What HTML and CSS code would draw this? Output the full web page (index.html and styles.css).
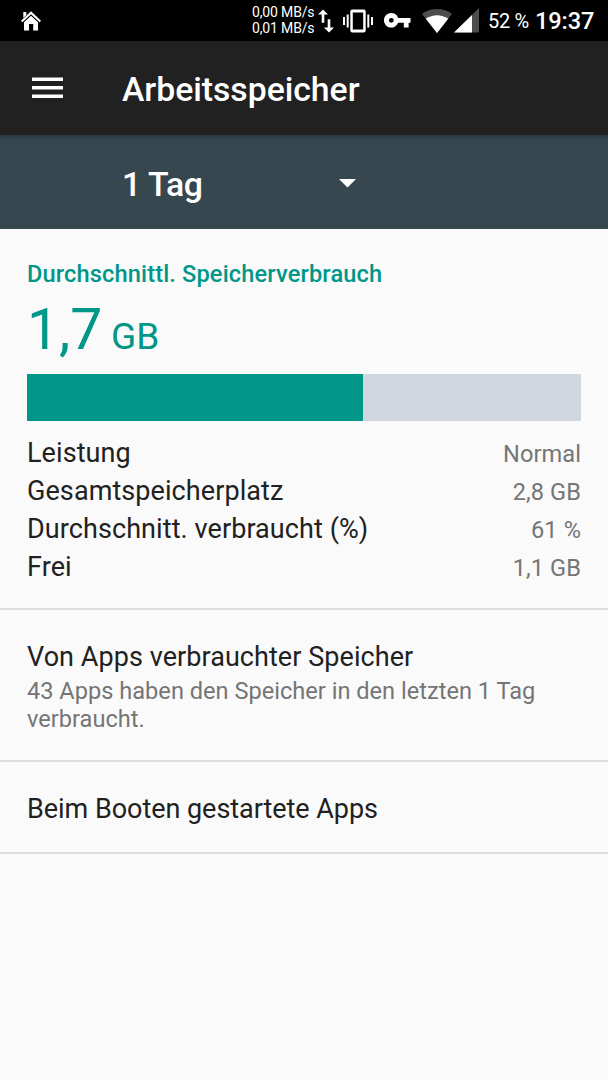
FILE: index.html
```html
<!DOCTYPE html>
<html lang="de">
<head>
<meta charset="utf-8">
<title>Arbeitsspeicher</title>
<link rel="stylesheet" href="styles.css">
</head>
<body>
<div class="statusbar">
  <svg class="icon-home" width="20" height="20" viewBox="0 0 20 20" fill="#fff"><path d="M2.3 1h3v3L2.3 7z"/><path d="M10 0.3L20 9.7L18.6 11.2L10 3.2L1.4 11.2L0 9.7z"/><path d="M10 4.8L17 11.3V19.4H12.2V13H8V19.4H3V11.3z"/></svg>
  <div class="traffic"><span>0,00 MB/s</span><span>0,01 MB/s</span></div>
  <svg class="icon-arrows" width="16" height="24" viewBox="0 0 16 24" fill="#fff"><path d="M5 .5L10 5.6H6.3V13.8H3.7V5.6H0z"/><path d="M11 23.5L6 18.4H9.7V10.2H12.3V18.4H16z"/></svg>
  <svg class="icon-vibrate" width="30" height="24" viewBox="0 0 30 24" fill="#fff"><path d="M0 8h2v8H0zM3.7 5.5h2v13h-2zM24.3 5.5h2v13h-2zM28 8h2v8h-2z"/><path fill-rule="evenodd" d="M9.3 0.5h11.4a2 2 0 0 1 2 2v19a2 2 0 0 1-2 2H9.3a2 2 0 0 1-2-2v-19a2 2 0 0 1 2-2zM9.8 3.5v17h10.4v-17z"/></svg>
  <svg class="icon-key" width="27" height="15" viewBox="0 0 27 15" fill="#fff"><path fill-rule="evenodd" d="M7.3 0A7.3 7.3 0 0 1 14.1 4.9H26.5V9.8H24.6V14.4H19.8V9.8H14.1A7.3 7.3 0 1 1 7.3 0zM7.3 4.9a2.4 2.4 0 1 0 0 4.8a2.4 2.4 0 0 0 0-4.8z"/></svg>
  <svg class="icon-wifi" width="30" height="24" viewBox="0 0 30 24"><path fill="#4d4d4d" d="M0 5C8-1.6 22-1.6 30 5L15 24z"/><path fill="#fff" d="M3.8 9.8C10.5 5 19.5 5 26.2 9.8L15 24z"/></svg>
  <svg class="icon-signal" width="25" height="25" viewBox="0 0 25 25"><path fill="#4d4d4d" d="M25 0V24.5H0z"/><path fill="#fff" d="M18 7V24.5H0z"/></svg>
  <span class="battery">52 %</span>
  <span class="clock">19:37</span>
</div>
<header class="appbar">
  <svg class="menu" width="31" height="22" viewBox="0 0 31 22" fill="#fff"><path d="M0 .4h31v3.6H0zM0 9h31v3.6H0zM0 17.4h31v3.6H0z"/></svg>
  <h1 class="title">Arbeitsspeicher</h1>
</header>
<div class="spinner">
  <span class="spinner-label">1 Tag</span>
  <svg class="caret" width="17" height="9" viewBox="0 0 17 9" fill="#fff"><path d="M0 0h17L8.5 8.5z"/></svg>
</div>
<section class="summary">
  <h2 class="heading">Durchschnittl. Speicherverbrauch</h2>
  <div class="amount"><span class="number">1,7</span> <span class="unit">GB</span></div>
  <div class="meter"><div class="meter-fill"></div></div>
  <div class="row"><span>Leistung</span><span class="value">Normal</span></div>
  <div class="row"><span>Gesamtspeicherplatz</span><span class="value">2,8 GB</span></div>
  <div class="row"><span>Durchschnitt. verbraucht (%)</span><span class="value">61 %</span></div>
  <div class="row"><span>Frei</span><span class="value">1,1 GB</span></div>
</section>
<section class="item item-apps">
  <div class="item-title">Von Apps verbrauchter Speicher</div>
  <p class="item-text">43 Apps haben den Speicher in den letzten 1 Tag verbraucht.</p>
</section>
<section class="item item-boot">
  <div class="item-title">Beim Booten gestartete Apps</div>
</section>
</body>
</html>
```
FILE: styles.css
```css
* { box-sizing: border-box; }
body {
  margin: 0;
  min-height: 1080px;
  background: #fafafa;
  color: #212121;
  font-family: Roboto, "Noto Sans", sans-serif;
  font-size: 27px;
}
h1, h2, p { margin: 0; }
svg { display: block; flex: none; }

.statusbar {
  display: flex;
  align-items: center;
  height: 41px;
  padding: 0 14px 0 20.5px;
  background: #000;
  color: #fff;
  white-space: nowrap;
}
.traffic {
  display: flex;
  flex-direction: column;
  width: 63px;
  margin-left: auto;
  padding-bottom: 1px;
  font-size: 14px;
  line-height: 16px;
  letter-spacing: -.15px;
}
.icon-arrows { margin-left: 3px; }
.icon-vibrate { margin-left: 9px; }
.icon-key { margin-left: 11px; }
.icon-wifi { margin-left: 11px; }
.icon-signal { margin-left: 2px; }
.battery { width: 42px; margin-left: 9px; font-size: 20px; letter-spacing: -.3px; }
.clock { width: 59px; margin-left: 5px; padding-top: 1px; font-size: 23.6px; font-weight: 500; letter-spacing: -.1px; }

.appbar {
  position: relative;
  display: flex;
  align-items: center;
  height: 94px;
  padding-left: 32px;
  background: #212121;
  color: #fff;
  box-shadow: 0 1px 5px rgba(0, 0, 0, .35);
}
.title {
  margin-left: 59px;
  padding-top: 3px;
  font-size: 33.8px;
  font-weight: 500;
  line-height: 40px;
  letter-spacing: -.05px;
}
.spinner {
  display: flex;
  align-items: center;
  height: 94px;
  padding: 0 0 0 122px;
  background: #37474f;
  color: #fff;
}
.spinner-label {
  width: 217px;
  padding-top: 5px;
  font-size: 33.8px;
  font-weight: 500;
  line-height: 40px;
  letter-spacing: -.4px;
}
.caret { margin-top: 3px; }

.summary {
  height: 381px;
  padding: 29px 27px 0;
  border-bottom: 2px solid #dedede;
}
.heading {
  color: #009688;
  font-size: 23.6px;
  font-weight: 500;
  line-height: 32px;
  letter-spacing: .14px;
}
.amount {
  height: 84px;
  color: #009688;
  line-height: 80px;
  white-space: nowrap;
}
.number { font-size: 57px; }
.unit { margin-left: 2px; font-size: 37px; }
.meter {
  height: 47px;
  margin-bottom: 13px;
  background: #cfd6dd;
}
.meter-fill {
  width: 336px;
  height: 100%;
  background: #009688;
}
.row {
  display: flex;
  justify-content: space-between;
  align-items: baseline;
  height: 38px;
  line-height: 38px;
  letter-spacing: .08px;
}
.value { color: #757575; font-size: 23.6px; }

.item {
  padding: 30px 27px 0;
  border-bottom: 2px solid #dedede;
}
.item-apps { height: 152px; }
.item-boot { height: 92px; }
.item-title { line-height: 34px; }
.item-apps .item-title { letter-spacing: .06px; }
.item-boot .item-title { letter-spacing: -.04px; }
.item-text {
  padding-top: 3px;
  color: #757575;
  font-size: 23.6px;
  line-height: 28px;
}
```
